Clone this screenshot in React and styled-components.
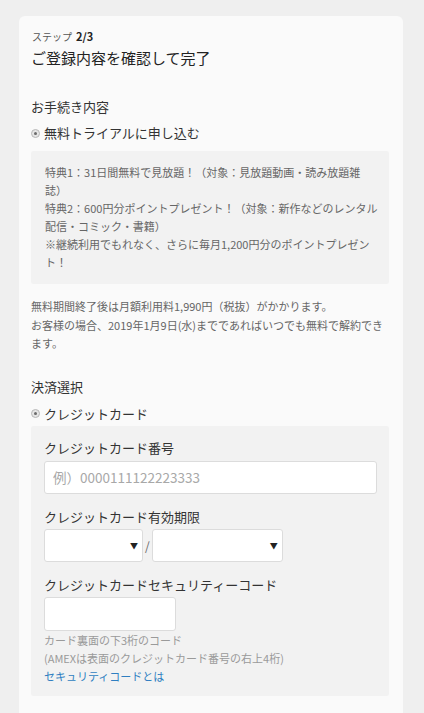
import React from "react";
import styled, { createGlobalStyle } from "styled-components";

const GlobalStyle = createGlobalStyle`
  html, body {
    margin: 0;
    padding: 0;
    background: #efefef;
  }
  body {
    font-family: "Noto Sans CJK JP", "Noto Sans", sans-serif;
    color: #333;
  }
`;

const Page = styled.div`
  padding: 16px 21px 0 19px;
`;

const Card = styled.div`
  background: #fafafa;
  border-radius: 6px;
  padding: 12px 14px 40px 12px;
`;

const Step = styled.div`
  font-size: 10px;
  line-height: 16px;
  color: #555;
  padding-left: 1px;

  b {
    font-size: 11px;
    color: #222;
    margin-left: 4px;
  }
`;

const Title = styled.h1`
  margin: 1px 0 0;
  font-size: 15px;
  line-height: 24px;
  font-weight: 400;
  color: #222;
`;

const SectionTitle = styled.h2`
  margin: ${(props) => props.$top}px 0 0;
  font-size: 13px;
  line-height: 20px;
  font-weight: 400;
  color: #333;
`;

const RadioRow = styled.label`
  display: flex;
  align-items: center;
  gap: 4px;
  margin-top: ${(props) => props.$top}px;
  font-size: 13px;
  line-height: 20px;
  color: #333;
`;

const RadioDot = styled.span`
  width: 9px;
  height: 9px;
  box-sizing: border-box;
  border-radius: 50%;
  border: 1px solid #b8b8b8;
  background: #e6e6e6;
  display: flex;
  align-items: center;
  justify-content: center;

  &::after {
    content: "";
    width: 3px;
    height: 3px;
    border-radius: 50%;
    background: #6a6a6a;
  }
`;

const InfoBox = styled.div`
  margin-top: ${(props) => props.$top}px;
  background: #f2f2f2;
  border-radius: 2px;
  padding: ${(props) => props.$pad};
`;

const BoxText = styled.p`
  margin: 0;
  font-size: 11px;
  line-height: 18px;
  color: #666;
`;

const Note = styled.p`
  margin: 13px 0 0;
  font-size: 11px;
  line-height: 18.5px;
  color: #666;
`;

const Field = styled.div`
  & + & {
    margin-top: 13px;
  }
`;

const FieldLabel = styled.div`
  font-size: 13px;
  line-height: 20px;
  color: #333;
  margin-bottom: ${(props) => props.$gap}px;
`;

const TextInput = styled.input`
  display: block;
  box-sizing: border-box;
  width: ${(props) => props.$w}px;
  height: ${(props) => props.$h}px;
  border: 1px solid #dcdcdc;
  border-radius: 3px;
  background: #fff;
  padding: 0 8px;
  font-family: "Noto Sans CJK JP", sans-serif;
  font-size: 13.5px;
  color: #333;
  outline: none;

  &::placeholder {
    color: #a8a8a8;
  }
`;

const SelectRow = styled.div`
  display: flex;
  align-items: center;
  gap: 2px;
  font-size: 12px;
  color: #666;
`;

const Select = styled.div`
  box-sizing: border-box;
  width: ${(props) => props.$w}px;
  height: 33px;
  border: 1px solid #dcdcdc;
  border-radius: 3px;
  background: #fff;
  display: flex;
  align-items: center;
  justify-content: flex-end;
  padding-right: 4px;
  font-size: 8px;
  color: #222;
`;

const Help = styled.p`
  margin: 0;
  font-size: 11px;
  line-height: 18px;
  color: #9a9a9a;
`;

const HelpLink = styled.a`
  display: block;
  font-size: 11px;
  line-height: 18px;
  color: #2f7fc1;
  text-decoration: none;
`;

const App = () => {
  return (
    <>
      <GlobalStyle />
      <Page>
        <Card>
          <Step>
            ステップ<b>2/3</b>
          </Step>
          <Title>ご登録内容を確認して完了</Title>

          <SectionTitle $top={27}>お手続き内容</SectionTitle>
          <RadioRow $top={6}>
            <RadioDot />
            無料トライアルに申し込む
          </RadioRow>
          <InfoBox $top={8} $pad="12px 10px 13px 14px">
            <BoxText>
              特典1：31日間無料で見放題！（対象：見放題動画・読み放題雑
              <br />
              誌）
              <br />
              特典2：600円分ポイントプレゼント！（対象：新作などのレンタル
              <br />
              配信・コミック・書籍）
              <br />
              ※継続利用でもれなく、さらに毎月1,200円分のポイントプレゼン
              <br />
              ト！
            </BoxText>
          </InfoBox>
          <Note>
            無料期間終了後は月額利用料1,990円（税抜）がかかります。
            <br />
            お客様の場合、2019年1月9日(水)までであればいつでも無料で解約でき
            <br />
            ます。
          </Note>

          <SectionTitle $top={24}>決済選択</SectionTitle>
          <RadioRow $top={7}>
            <RadioDot />
            クレジットカード
          </RadioRow>
          <InfoBox $top={2} $pad="12px 12px 11px 13px">
            <Field>
              <FieldLabel $gap={3}>クレジットカード番号</FieldLabel>
              <TextInput $w={333} $h={33} placeholder="例）0000111122223333" />
            </Field>
            <Field>
              <FieldLabel $gap={2}>クレジットカード有効期限</FieldLabel>
              <SelectRow>
                <Select $w={99}>▼</Select>
                /
                <Select $w={131}>▼</Select>
              </SelectRow>
            </Field>
            <Field>
              <FieldLabel $gap={2}>クレジットカードセキュリティーコード</FieldLabel>
              <TextInput $w={132} $h={34} />
              <Help>
                カード裏面の下3桁のコード
                <br />
                (AMEXは表面のクレジットカード番号の右上4桁)
              </Help>
              <HelpLink href="#">セキュリティコードとは</HelpLink>
            </Field>
          </InfoBox>
        </Card>
      </Page>
    </>
  );
};

export default App;
